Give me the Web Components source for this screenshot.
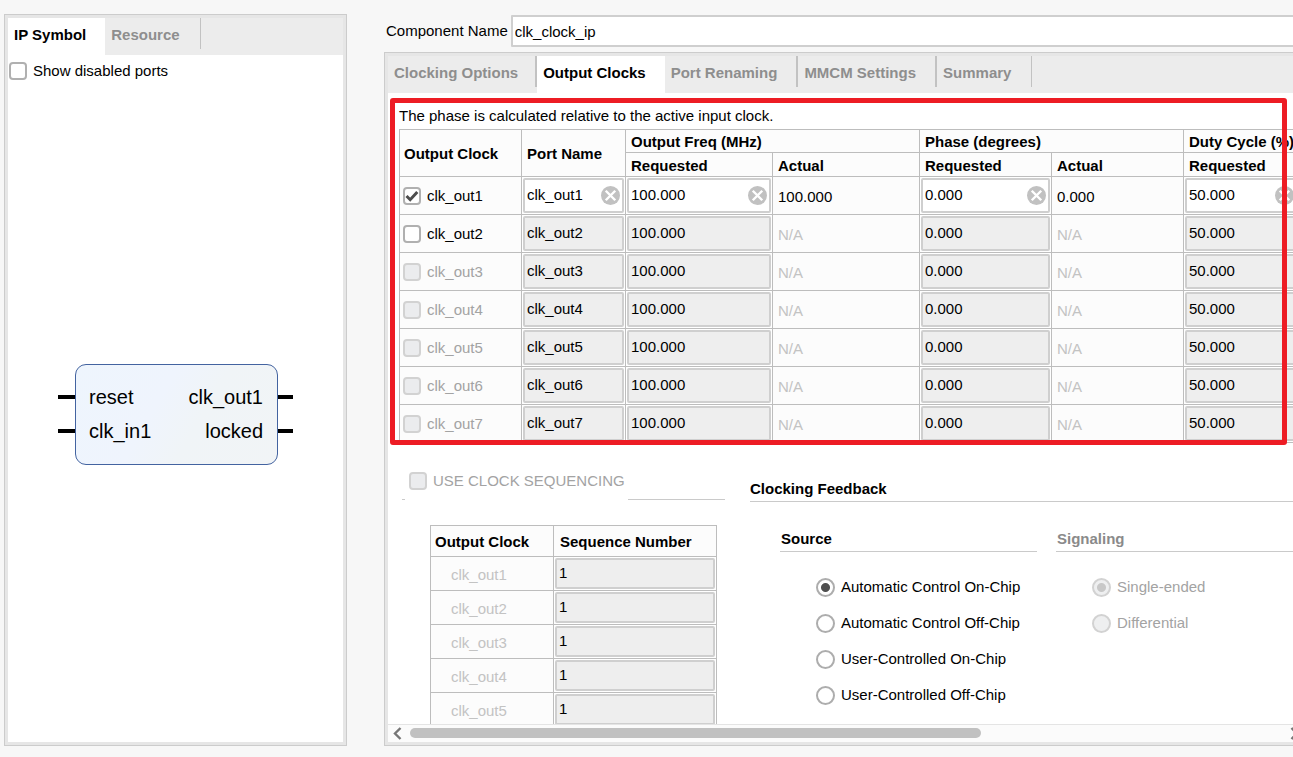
<!DOCTYPE html>
<html lang="en">
<head>
<meta charset="utf-8">
<title>Clocking Wizard</title>
<style>
  html, body { height: 100%; }
  body { margin: 0; overflow: hidden; background: #f7f7f7; color: #000; font: 15px/18px "Liberation Sans", Arial, sans-serif; }
</style>
</head>
<body>
<clocking-wizard></clocking-wizard>
<script>
const define = (name, html, setup) => {
  const template = document.createElement('template');
  template.innerHTML = `<style>*, *::before, *::after { box-sizing: border-box; }</style>${html}`;
  customElements.define(name, class extends HTMLElement {
    constructor() {
      super();
      this.attachShadow({ mode: 'open' }).append(template.content.cloneNode(true));
    }
    connectedCallback() {
      if (this.ready) return;
      this.ready = true;
      if (setup) setup(this.shadowRoot, this);
    }
  });
};

/* Tick box with its label */
define('wiz-check', `
<style>
  :host { display: flex; }
  label { display: flex; align-items: center; gap: 6px; }
  input { appearance: none; flex: none; width: 18px; height: 18px; margin: 0; border: 2px solid #b0b0b0; border-radius: 4px; background: #fff; }
  .box { display: grid; }
  .box > * { grid-area: 1 / 1; }
  svg { width: 18px; height: 18px; display: none; pointer-events: none; }
  input:checked + svg { display: block; }
  input:disabled { border-color: #d2d2d2; background: #ebecee; }
  :host([disabled]) { color: #a3a3a3; }
</style>
<label><span class="box"><input type="checkbox"><svg viewBox="0 0 18 18" fill="none" stroke="#4d4d4d" stroke-width="3"><path d="M3.5 9l3.7 3.7L14.3 5"/></svg></span><slot></slot></label>`,
(root, host) => {
  const input = root.querySelector('input');
  input.checked = host.hasAttribute('checked');
  input.disabled = host.hasAttribute('disabled');
});

/* Text box used in table cells, with an optional clear button */
define('wiz-field', `
<style>
  :host { display: block; height: 100%; padding: 1px; }
  div { display: flex; align-items: center; height: 100%; border: 2px solid #cfcfcf; border-radius: 2px; background: #fff; }
  input { flex: 1; min-width: 0; width: 0; height: 100%; border: 0; margin: 0; padding: 0 0 2px 2px; background: none; color: #000; font: inherit; outline: 0; }
  button { flex: none; display: block; width: 19px; height: 19px; margin: 0 2px 0 0; padding: 0; border: 0; background: none; }
  svg { display: block; }
  :host([disabled]) div { background: #eee; }
  :host([disabled]) button { display: none; }
</style>
<div><input type="text"><button type="button" aria-label="Clear"><svg width="19" height="19" viewBox="0 0 20 20"><circle cx="10" cy="10" r="10" fill="#c1c1c1"/><path d="M5 5l10 10M15 5L5 15" stroke="#fff" stroke-width="2.6"/></svg></button></div>`,
(root, host) => {
  const input = root.querySelector('input');
  input.value = host.getAttribute('value');
  input.setAttribute('aria-label', host.getAttribute('label'));
  input.disabled = host.hasAttribute('disabled');
  root.querySelector('button').onclick = () => { input.value = ''; };
});

/* Framed panel: tab strip on top, content below, optional footer */
define('wiz-panel', `
<style>
  :host { display: flex; flex-direction: column; min-height: 0; border: 1px solid #ccc; }
  .frame { flex: 1; min-height: 0; display: flex; flex-direction: column; border: 3px solid #e6e6e6; background: #fff; }
  .tabs { flex: none; display: flex; height: 37px; background: #ececec; }
  button { padding: 0 19px 4px 6px; border: 0; color: #8e8e8e; font: bold 15px/18px "Liberation Sans", Arial, sans-serif; white-space: nowrap;
    background: linear-gradient(#c2c2c2, #c2c2c2) no-repeat right top / 2px 31px; }
  button[aria-selected="true"] ~ button { padding-right: 21px; }
  button:last-child { background-size: 1px 31px; }
  button[aria-selected="true"] { background: #fff; color: #000; }
  .body { flex: 1; min-height: 0; overflow: hidden; display: flex; flex-direction: column; }
</style>
<div class="frame"><div class="tabs" role="tablist"></div><div class="body"><slot></slot></div><slot name="footer"></slot></div>`,
(root, host) => {
  root.querySelector('.tabs').innerHTML = host.getAttribute('tabs').split('|')
    .map(t => `<button role="tab" type="button" aria-selected="${t === host.getAttribute('selected')}">${t}</button>`).join('');
});

/* Block symbol with its ports */
define('ip-symbol', `
<style>
  :host { display: block; padding: 0 15px 0 17px; }
  .block { display: grid; grid-template-columns: 1fr auto; width: 203px; padding: 15px 14px 16px 13px; border: 1px solid #4363a0; border-radius: 11px;
    background: linear-gradient(120deg, #eef5fd, #eff4fd 40%, #f0f4f7 60%, #f1f4f6); font-size: 20px; line-height: 34px; }
  span { position: relative; }
  span:nth-child(even) { text-align: right; }
  span::before { content: ""; position: absolute; top: 15px; left: -31px; width: 17px; height: 4px; background: #000; }
  span:nth-child(even)::before { left: auto; right: -30px; width: 15px; }
</style>
<div class="block"><span>reset</span><span>clk_out1</span><span>clk_in1</span><span>locked</span></div>`);

/* Grid look shared by both data tables */
const tableStyle = `
  :host { display: block; }
  table { width: 100%; table-layout: fixed; border-spacing: 0; border: solid #bdbdbd; border-width: 1px 0 0 1px; background: #fcfcfc; }
  th, td { padding: 0 0 0 5px; border: solid #bdbdbd; border-width: 0 1px 1px 0; text-align: left; white-space: nowrap; }
  th { padding-top: 2px; }
  td.edit { padding: 0; background: #fff; }
  .dim { color: #c3c3c3; }`;

define('clock-table', `
<style>${tableStyle}
  .top { height: 23px; }
  .sub { height: 24px; }
  tbody tr { height: 38px; }
  tbody td:first-child { padding-left: 3px; }
  wiz-field { height: 37px; }
  .out { padding-top: 3px; }
  th:first-child[rowspan] { padding-left: 4px; }
</style>
<table>
  <colgroup><col style="width:122px"><col style="width:104px"><col style="width:147px"><col style="width:147px"><col style="width:132px"><col style="width:132px"><col style="width:116px"></colgroup>
  <thead>
    <tr class="top"><th rowspan="2">Output Clock</th><th rowspan="2">Port Name</th><th colspan="2">Output Freq (MHz)</th><th colspan="2">Phase (degrees)</th><th>Duty Cycle (%)</th></tr>
    <tr class="sub"><th>Requested</th><th>Actual</th><th>Requested</th><th>Actual</th><th>Requested</th></tr>
  </thead>
  <tbody></tbody>
</table>`,
root => {
  const rows = [];
  for (let i = 1; i <= 7; i++) {
    const name = `clk_out${i}`, on = i === 1;
    const edit = (label, value) => `<td class="edit"><wiz-field label="${name} ${label}" value="${value}" ${on ? '' : 'disabled'}></wiz-field></td>`;
    const out = value => `<td class="out ${on ? '' : 'dim'}">${on ? value : 'N/A'}</td>`;
    rows.push(`<tr><td><wiz-check ${on ? 'checked' : ''} ${i > 2 ? 'disabled' : ''}>${name}</wiz-check></td>
      ${edit('port name', name)}${edit('requested frequency', '100.000')}${out('100.000')}${edit('requested phase', '0.000')}${out('0.000')}${edit('requested duty cycle', '50.000')}</tr>`);
  }
  root.querySelector('tbody').innerHTML = rows.join('');
});

define('sequence-table', `
<style>${tableStyle}
  thead tr { height: 31px; }
  tbody tr { height: 34px; }
  th:first-child { padding-left: 4px; }
  th + th { padding-left: 6px; }
  td.dim { padding: 3px 0 0 20px; }
  wiz-field { height: 33px; }
</style>
<table>
  <colgroup><col style="width:123px"><col style="width:163px"></colgroup>
  <thead><tr><th>Output Clock</th><th>Sequence Number</th></tr></thead>
  <tbody></tbody>
</table>`,
root => {
  root.querySelector('tbody').innerHTML = [1, 2, 3, 4, 5].map(i =>
    `<tr><td class="dim">clk_out${i}</td><td class="edit"><wiz-field label="clk_out${i} sequence number" value="1" disabled></wiz-field></td></tr>`).join('');
});

/* Titled set of radio buttons; the first option is chosen */
define('radio-group', `
<style>
  :host { display: block; }
  fieldset { margin: 0; padding: 0; border: 0; min-width: 0; }
  legend { width: 100%; height: 22px; padding: 0 1px; border-bottom: 1px solid #cacaca; font-weight: bold; }
  .list { display: grid; gap: 18px; padding: 26px 0 0 36px; }
  label { display: flex; align-items: center; gap: 6px; height: 18px; white-space: nowrap; }
  input { appearance: none; flex: none; width: 19px; height: 19px; margin: 0; border: 2px solid #adadad; border-radius: 50%; background: #fff; }
  input:checked { background: radial-gradient(circle, #4f4f4f 4px, #fff 5px); }
  input:disabled { border-color: #d2d2d2; background: #eeeff0; }
  input:disabled:checked { background: radial-gradient(circle, #c8c8c8 4px, #eeeff0 5px); }
  :host([disabled]) legend { color: #8a8a8a; }
  :host([disabled]) { color: #a3a3a3; }
</style>
<fieldset><legend></legend><div class="list"></div></fieldset>`,
(root, host) => {
  const off = host.hasAttribute('disabled') ? 'disabled' : '';
  root.querySelector('legend').textContent = host.getAttribute('title-text');
  root.querySelector('.list').innerHTML = host.getAttribute('options').split('|')
    .map((o, i) => `<label><input type="radio" name="choice" ${i ? '' : 'checked'} ${off}>${o}</label>`).join('');
});

/* Horizontal scroll bar along the foot of a panel */
define('scroll-strip', `
<style>
  :host { display: flex; flex: none; height: 18px; border-top: 1px solid #e4e4e4; background: #fbfbfb; }
  button { flex: none; display: flex; align-items: flex-start; width: 22px; padding: 2px 0 0 5px; border: 0; background: none; }
  .next { padding-left: 8px; }
  svg { display: block; }
  .track { flex: 1; display: flex; align-items: flex-start; padding-top: 3px; }
  .thumb { flex: 131; height: 10px; border-radius: 5px; background: #c1c1c1; }
  .rest { flex: 69; }
</style>
<button type="button" aria-label="Scroll left"><svg width="9" height="13" viewBox="0 0 9 13" fill="none" stroke="#767676" stroke-width="2.4"><path d="M7.5 1L2 6.5L7.5 12"/></svg></button>
<div class="track"><div class="thumb"></div><div class="rest"></div></div>
<button class="next" type="button" aria-label="Scroll right"><svg width="9" height="13" viewBox="0 0 9 13" fill="none" stroke="#767676" stroke-width="2.4"><path d="M1.5 1L7 6.5L1.5 12"/></svg></button>`);

/* Content of the Output Clocks tab */
define('output-clocks', `
<style>
  :host { display: block; }
  .clocks { position: relative; padding: 14px 4px 0 11px; }
  p { margin: 0 0 4px; }
  .mark { position: absolute; inset: 5px 17px -2px 2px; border: 5px solid #ed1c24; border-radius: 3px; pointer-events: none; }
  .lower { display: grid; grid-template-columns: 323px 1fr; column-gap: 25px; padding: 28px 4px 0 14px; }
  .legend { display: flex; height: 29px; border-bottom: 1px solid #cacaca; padding-left: 3px; }
  .legend wiz-check { position: relative; height: 29px; padding: 0 3px 9px 4px; background: #fff; }
  sequence-table { margin: 25px 9px 0 28px; }
  h2 { height: 22px; margin: 9px 0 0; border-bottom: 1px solid #cacaca; font-size: 15px; line-height: 18px; }
  .pair { display: grid; grid-template-columns: 257fr 244fr; gap: 19px; padding: 28px 0 0 30px; }
</style>
<section class="clocks">
  <p>The phase is calculated relative to the active input clock.</p>
  <clock-table></clock-table>
  <div class="mark"></div>
</section>
<div class="lower">
  <section>
    <div class="legend"><wiz-check disabled>USE CLOCK SEQUENCING</wiz-check></div>
    <sequence-table></sequence-table>
  </section>
  <section>
    <h2>Clocking Feedback</h2>
    <div class="pair">
      <radio-group title-text="Source" options="Automatic Control On-Chip|Automatic Control Off-Chip|User-Controlled On-Chip|User-Controlled Off-Chip"></radio-group>
      <radio-group title-text="Signaling" options="Single-ended|Differential" disabled></radio-group>
    </div>
  </section>
</div>`);

define('component-name', `
<style>
  :host { display: flex; align-items: center; gap: 3px; padding-left: 2px; }
  input { flex: 1; min-width: 0; height: 32px; margin: 0; padding: 0 2px; border: 2px solid #cfcfcf; border-radius: 1px; background: #fff; color: #000; font: inherit; outline: 0; }
</style>
<label for="name">Component Name</label><input id="name" type="text" value="clk_clock_ip">`);

/* The main column runs past the right edge of the window, as a scrolled pane does */
define('clocking-wizard', `
<style>
  :host { display: flex; gap: 37px; height: 100vh; padding: 14px 0 11px 4px; box-sizing: border-box; }
  .side { flex: none; width: 343px; }
  .option { height: 32px; padding-left: 1px; }
  .stage { flex: 1; display: flex; align-items: center; justify-content: center; }
  main { flex: 1; min-width: 0; margin-right: -15px; display: flex; flex-direction: column; gap: 5px; padding-top: 1px; }
  .main { flex: 1; }
</style>
<wiz-panel class="side" tabs="IP Symbol|Resource" selected="IP Symbol">
  <wiz-check class="option">Show disabled ports</wiz-check>
  <div class="stage"><ip-symbol></ip-symbol></div>
</wiz-panel>
<main>
  <component-name></component-name>
  <wiz-panel class="main" tabs="Clocking Options|Output Clocks|Port Renaming|MMCM Settings|Summary" selected="Output Clocks">
    <output-clocks></output-clocks>
    <scroll-strip slot="footer"></scroll-strip>
  </wiz-panel>
</main>`);
</script>
</body>
</html>
